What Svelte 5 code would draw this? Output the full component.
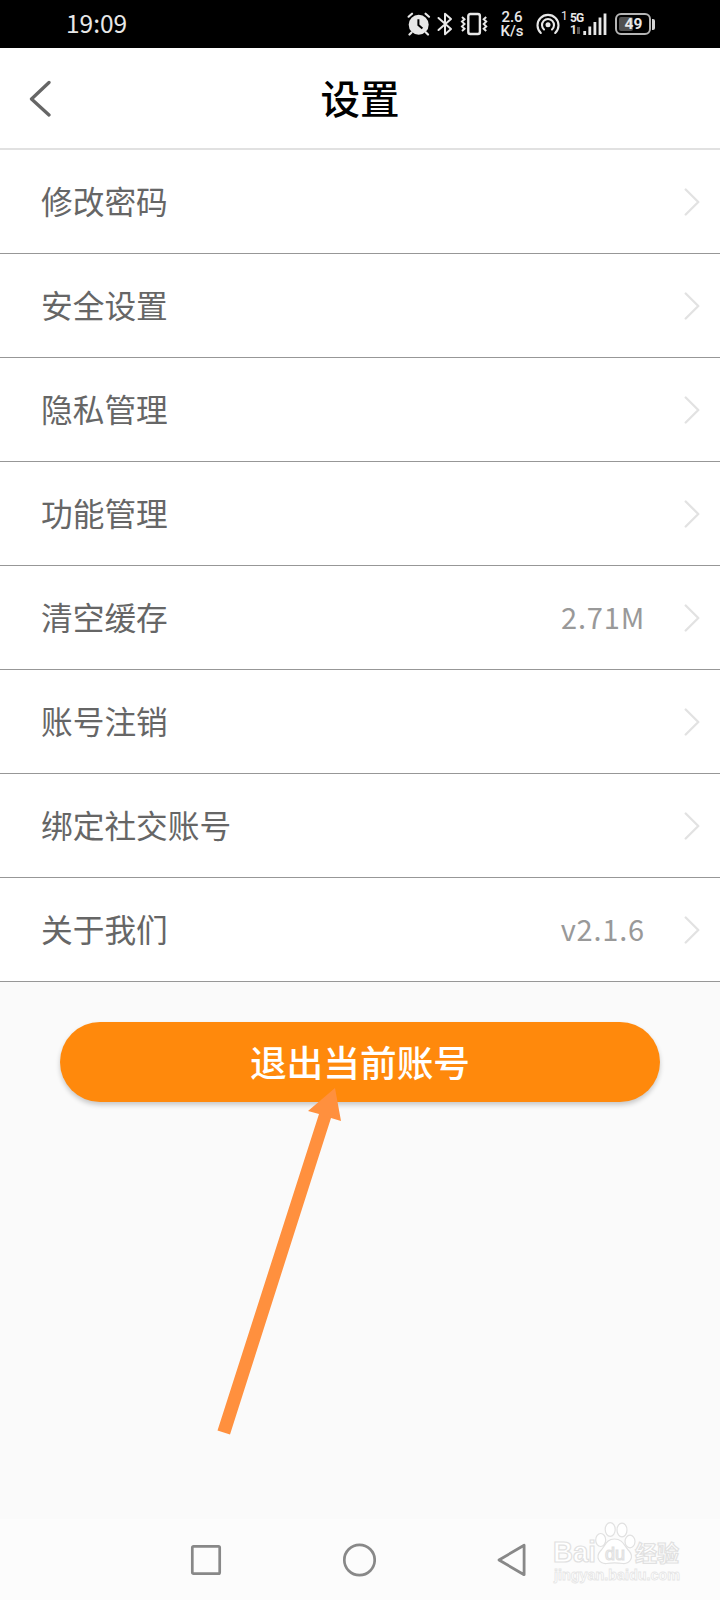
<script>
    let items = [
        { label: "修改密码" },
        { label: "安全设置" },
        { label: "隐私管理" },
        { label: "功能管理" },
        { label: "清空缓存", value: "2.71M" },
        { label: "账号注销" },
        { label: "绑定社交账号" },
        { label: "关于我们", value: "v2.1.6" },
    ];
</script>

<div class="screen">
    <div class="status-bar">
        <span class="time">19:09</span>
        <div class="status-icons">
            <!-- alarm -->
            <svg class="alarm" width="24" height="24" viewBox="0 0 24 24">
                <circle cx="11.7" cy="12.7" r="10" fill="#e8e8e8" />
                <path d="M1.6 4.7 5 1.7M18.6 1.7 22 4.7M4.5 20.5 2.5 22.5M19 20.5 21 22.5" stroke="#e8e8e8" stroke-width="2.2" stroke-linecap="round" />
                <path d="M11.4 7.3V13l4 3.5" fill="none" stroke="#000" stroke-width="2" />
            </svg>
            <!-- bluetooth -->
            <svg class="bluetooth" width="16" height="24" viewBox="0 0 16 24">
                <path d="M1.5 6 14 17 8 22.3V1.7L14 7 1.5 18" fill="none" stroke="#e8e8e8" stroke-width="2" stroke-linejoin="round" stroke-linecap="round" />
            </svg>
            <!-- vibrate -->
            <svg class="vibrate" width="28" height="24" viewBox="0 0 28 24">
                <rect x="8.3" y="2" width="11.6" height="20" rx="2" fill="none" stroke="#e8e8e8" stroke-width="2.4" />
                <path d="M2 5 4.5 7.3 2 9.6 4.5 12 2 14.4 4.5 16.7 2 19M26.2 5 23.7 7.3 26.2 9.6 23.7 12 26.2 14.4 23.7 16.7 26.2 19" fill="none" stroke="#e8e8e8" stroke-width="2" />
            </svg>
            <div class="speed">
                <span>2.6</span>
                <span>K/s</span>
            </div>
            <!-- hotspot -->
            <svg class="hotspot" width="24" height="24" viewBox="0 0 24 24">
                <circle cx="12" cy="12.8" r="2.5" fill="#e8e8e8" />
                <path d="M8 17.5A6 6 0 1 1 16 17.5" fill="none" stroke="#e8e8e8" stroke-width="2.1" stroke-linecap="round" />
                <path d="M4.8 21A10.5 10.5 0 1 1 19.2 21" fill="none" stroke="#e8e8e8" stroke-width="2.1" stroke-linecap="round" />
            </svg>
            <span class="hotspot-count">1</span>
            <div class="network">
                <span>5G</span>
                <span>1<i></i></span>
            </div>
            <!-- signal -->
            <svg class="signal" width="24" height="24" viewBox="0 0 24 24">
                <path d="M1.7 19V23M6.8 14.5V23M11.9 10V23M17 5.5V23M22 1.5V23" stroke="#e8e8e8" stroke-width="2.8" />
            </svg>
            <div class="battery">
                <span class="battery-level" style="width: 49%"></span>
                <span class="battery-text">49</span>
            </div>
            <span class="battery-cap"></span>
        </div>
    </div>

    <header class="header">
        <svg class="back" width="24" height="38" viewBox="0 0 24 38">
            <path d="M21 3.500 3.500 20 21 36" fill="none" stroke="#666" stroke-width="3.3" stroke-linecap="round" stroke-linejoin="round" />
        </svg>
        <h1>设置</h1>
    </header>

    <ul class="list">
        {#each items as item}
            <li class="row">
                <span class="label">{item.label}</span>
                {#if item.value}
                    <span class="value">{item.value}</span>
                {/if}
                <svg class="arrow" width="16" height="28" viewBox="0 0 16 28">
                    <path d="M1.7 1.5 14.3 14 1.7 26.5" fill="none" stroke="#e2e2e2" stroke-width="2.3" stroke-linecap="round" stroke-linejoin="round" />
                </svg>
            </li>
        {/each}
    </ul>

    <main class="content">
        <button class="logout" type="button">退出当前账号</button>
    </main>

    <svg class="pointer" width="140" height="360" viewBox="0 0 140 360">
        <path d="M125 4 131 37 121 34 20 350.5 7.5 346.500 109 30 98 27Z" fill="#ff903e" />
    </svg>

    <nav class="nav-bar">
        <svg width="34" height="34" viewBox="0 0 34 34">
            <rect x="3.3" y="3.3" width="27.4" height="27.4" rx="1.2" fill="none" stroke="#888" stroke-width="2.7" />
        </svg>
        <svg width="34" height="34" viewBox="0 0 34 34">
            <circle cx="17.5" cy="17" r="15.2" fill="none" stroke="#888" stroke-width="2.7" />
        </svg>
        <svg width="34" height="34" viewBox="0 0 34 34">
            <path d="M4 17 29.1 2.3V31.7Z" fill="none" stroke="#888" stroke-width="2.8" stroke-linejoin="round" />
        </svg>
    </nav>

    <!-- watermark -->
    <svg class="watermark" width="140" height="72" viewBox="0 0 140 72">
        <g fill="#fff" stroke="#e1e1e1" stroke-width="1.2">
            <text x="3" y="44" font-size="29" textLength="43" lengthAdjust="spacingAndGlyphs">Bai</text>
            <text class="cn" x="85" y="43" font-size="22" textLength="44">经验</text>
            <ellipse cx="50.7" cy="22" rx="5" ry="6.5" />
            <ellipse cx="60.2" cy="11.5" rx="5" ry="6.8" />
            <ellipse cx="72" cy="12" rx="5" ry="6.8" />
            <ellipse cx="80" cy="23.500" rx="5" ry="6.3" />
            <path d="M64.5 21C73 21 74 28 79.5 33.5C84 39 80 46 73 45.5C67 44.5 62 44.5 56.5 45.5C49 46 45.500 39 50 33.5C55.5 28 56 21 64.5 21Z" />
            <text class="du" x="55" y="42" font-size="18" textLength="20" lengthAdjust="spacingAndGlyphs">du</text>
        </g>
        <text class="url" x="4" y="62" font-size="14" textLength="126" lengthAdjust="spacingAndGlyphs">jingyan.baidu.com</text>
    </svg>
</div>

<style>
    :global(body) {
        margin: 0;
    }

    .screen {
        position: relative;
        display: flex;
        flex-direction: column;
        width: 720px;
        height: 1600px;
        overflow: hidden;
        background: #fafafa;
        font-family: "Noto Sans CJK SC", sans-serif;
    }

    .status-bar {
        display: flex;
        align-items: center;
        justify-content: space-between;
        box-sizing: border-box;
        height: 48px;
        padding: 0 65px 0 66px;
        background: #000;
        color: #e8e8e8;
    }

    .time {
        font-size: 24.5px;
        line-height: 46px;
        height: 48px;
    }

    .status-icons {
        display: flex;
        align-items: center;
        height: 48px;
        font-family: Roboto, sans-serif;
    }

    .bluetooth {
        margin-left: 6px;
    }

    .vibrate {
        margin-left: 7px;
    }

    .speed {
        display: flex;
        flex-direction: column;
        align-items: center;
        width: 24px;
        margin-left: 12px;
        font-size: 15px;
        font-weight: 500;
        line-height: 14px;
    }

    .hotspot {
        margin-left: 12px;
    }

    .hotspot-count {
        width: 7px;
        height: 26px;
        margin-left: 1px;
        font-size: 12px;
        line-height: 11px;
    }

    .network {
        display: flex;
        flex-direction: column;
        width: 13px;
        margin-left: 2px;
        font-size: 12px;
        font-weight: 700;
        line-height: 12.5px;
        white-space: nowrap;
        letter-spacing: -1px;
    }

    .network i {
        display: inline-block;
        width: 3px;
        height: 7px;
        margin-left: 1px;
        background: #555;
    }

    .battery {
        position: relative;
        box-sizing: border-box;
        width: 36px;
        height: 22px;
        margin-left: 8px;
        padding: 2px;
        border: 2px solid #b5b5b5;
        border-radius: 6px;
    }

    .battery-level {
        display: block;
        height: 100%;
        border-radius: 2px;
        background: #505050;
    }

    .battery-text {
        position: absolute;
        inset: 0 0 0 1px;
        font-size: 15.5px;
        font-weight: 700;
        line-height: 19px;
        text-align: center;
    }

    .battery-cap {
        width: 3px;
        height: 11px;
        margin-left: 1px;
        border-radius: 0 2px 2px 0;
        background: #d5d5d5;
    }

    .header {
        display: grid;
        grid-template-columns: 60px 1fr 60px;
        align-items: center;
        box-sizing: border-box;
        height: 102px;
        border-bottom: 2px solid #e1e1e1;
        background: #fff;
    }

    .back {
        margin-left: 28px;
    }

    h1 {
        height: 100px;
        margin: 0;
        color: #000;
        font-family: KaiTi, STKaiti, "Noto Sans CJK SC", sans-serif;
        font-size: 39.5px;
        font-weight: 500;
        line-height: 98px;
        text-align: center;
    }

    .list {
        margin: 0;
        padding: 0;
        list-style: none;
        background: #fff;
    }

    .row {
        display: flex;
        align-items: center;
        box-sizing: border-box;
        height: 104px;
        padding: 0 20px 0 41px;
        border-bottom: 1px solid #979797;
    }

    .label {
        flex: 1;
        height: 103px;
        color: #666;
        font-family: KaiTi, STKaiti, "Noto Sans CJK SC", sans-serif;
        font-size: 31.7px;
        line-height: 101px;
    }

    .value {
        height: 103px;
        margin-right: 39px;
        color: #999;
        font-size: 29px;
        line-height: 101px;
        letter-spacing: 0.8px;
    }

    .content {
        flex: 1;
        padding: 40px 60px 0;
    }

    .logout {
        display: block;
        width: 100%;
        height: 80px;
        padding: 0 0 2px;
        border: none;
        border-radius: 40px;
        background: #ff890c;
        box-shadow: 0 3px 5px rgba(0, 0, 0, 0.2);
        color: #fff;
        font-family: KaiTi, STKaiti, "Noto Sans CJK SC", sans-serif;
        font-size: 36.7px;
        font-weight: 500;
        line-height: 78px;
    }

    .pointer {
        position: absolute;
        top: 1084px;
        left: 210px;
    }

    .nav-bar {
        display: flex;
        align-items: center;
        justify-content: space-between;
        box-sizing: border-box;
        height: 81px;
        padding: 0 191px 0 189px;
        background: #fcfcfc;
    }

    .watermark {
        position: absolute;
        top: 1518px;
        left: 550px;
        font-family: "Liberation Sans", sans-serif;
        font-weight: 700;
    }

    .cn {
        font-family: "Noto Sans CJK SC", sans-serif;
    }

    .du {
        font-weight: 400;
    }

    .url {
        fill: #fff;
        stroke: #e6e6e6;
        stroke-width: 0.8;
    }
</style>
